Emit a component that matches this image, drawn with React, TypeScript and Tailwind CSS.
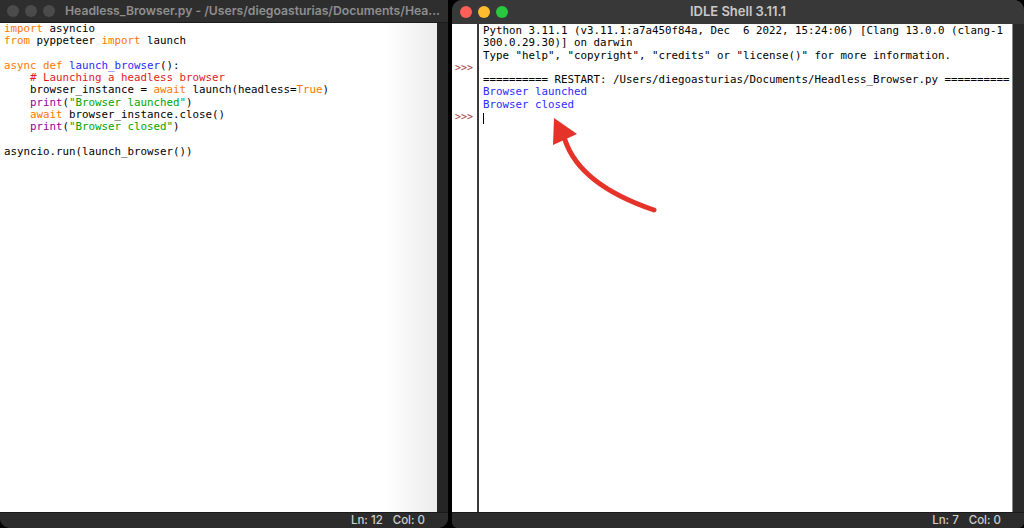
const mono = { fontFamily: '"DejaVu Sans Mono", "Liberation Mono", monospace' };

function Dots({ active }: { active: boolean }) {
  return (
    <div className="flex items-center gap-[6px]">
      <span className={`h-[12px] w-[12px] rounded-full ${active ? 'bg-[#fe5f57]' : 'bg-[#4b4b4b]'}`} />
      <span className={`h-[12px] w-[12px] rounded-full ${active ? 'bg-[#febc2e]' : 'bg-[#4b4b4b]'}`} />
      <span className={`h-[12px] w-[12px] rounded-full ${active ? 'bg-[#28c840]' : 'bg-[#4b4b4b]'}`} />
    </div>
  );
}

function StatusBar({ ln }: { ln: number }) {
  return (
    <div className="flex h-[16px] items-center justify-end gap-[10px] border-t border-[#1a1a1a] bg-[#2c2c2c] pr-[23px] font-['Inter','Liberation_Sans',sans-serif] text-[11.5px] font-medium text-[#cfcfcf]">
      <span>Ln: {ln}</span>
      <span>Col: 0</span>
    </div>
  );
}

const K = 'text-[#ff7700]';
const B = 'text-[#9a009a]';
const S = 'text-[#00a600]';

export default function App() {
  return (
    <div className="relative flex h-[528px] w-[1024px] overflow-hidden bg-black">
      {/* editor window */}
      <div className="flex w-[448px] flex-col overflow-hidden rounded-b-[10px] bg-[#2c2c2c]">
        <div className="flex h-[23px] items-center gap-[10px] overflow-hidden border-b border-[#1c1c1c] bg-[#2e2e2e] pl-[7px]">
          <Dots active={false} />
          <span className="whitespace-nowrap font-['Inter','Liberation_Sans',sans-serif] text-[12.2px] font-semibold text-[#8f8f8f]">
            Headless_Browser.py - /Users/diegoasturias/Documents/Hea...
          </span>
        </div>
        <div className="flex flex-1">
          <div className="flex-1 bg-gradient-to-r from-white from-[88%] to-[#ececec] pl-[4px] text-[10.8px] leading-[12.25px] text-black" style={mono}>
            <pre style={mono}>
              <span className={K}>import</span> asyncio{'\n'}
              <span className={K}>from</span> pyppeteer <span className={K}>import</span> launch{'\n'}
              {'\n'}
              <span className={K}>async def</span> <span className="text-[#2b2bff]">launch_browser</span>():{'\n'}
              {'    '}<span className="text-[#e21b1b]"># Launching a headless browser</span>{'\n'}
              {'    '}browser_instance = <span className={K}>await</span> launch(headless=<span className={K}>True</span>){'\n'}
              {'    '}<span className={B}>print</span>(<span className={S}>"Browser launched"</span>){'\n'}
              {'    '}<span className={K}>await</span> browser_instance.close(){'\n'}
              {'    '}<span className={B}>print</span>(<span className={S}>"Browser closed"</span>){'\n'}
              {'\n'}
              asyncio.run(launch_browser())
            </pre>
          </div>
          <div className="w-[11px] bg-[#252525]" />
        </div>
        <StatusBar ln={12} />
      </div>

      <div className="w-[4px]" />

      {/* shell window */}
      <div className="flex flex-1 flex-col overflow-hidden rounded-t-[10px] rounded-b-[6px] bg-[#2c2c2c]">
        <div className="relative flex h-[24px] items-center bg-[#383838] pl-[8px]">
          <Dots active />
          <span className="absolute inset-x-0 text-center font-['Inter','Liberation_Sans',sans-serif] text-[13px] font-semibold text-[#c9c9c9]">
            IDLE Shell 3.11.1
          </span>
        </div>
        <div className="flex flex-1">
          <div className="w-[25px] bg-white pt-[1px] text-[10px] leading-[12.3px] text-[#a83c3c]" style={mono}>
            <pre style={mono} className="pl-[3px]">
              {'\n\n\n'}&gt;&gt;&gt;{'\n\n\n\n'}&gt;&gt;&gt;
            </pre>
          </div>
          <div className="w-[2px] bg-[#3a3a3a]" />
          <div className="flex-1 overflow-hidden bg-white pl-[4px] pt-[1px] text-[10.8px] leading-[12.3px] text-black" style={mono}>
            <pre style={mono}>
              Python 3.11.1 (v3.11.1:a7a450f84a, Dec  6 2022, 15:24:06) [Clang 13.0.0 (clang-1{'\n'}
              300.0.29.30)] on darwin{'\n'}
              Type "help", "copyright", "credits" or "license()" for more information.{'\n'}
              {'\n'}
              ========== RESTART: /Users/diegoasturias/Documents/Headless_Browser.py =========={'\n'}
              <span className="text-[#2b2bff]">Browser launched</span>{'\n'}
              <span className="text-[#2b2bff]">Browser closed</span>{'\n'}
              <span className="inline-block h-[11px] w-[1px] translate-y-[1px] bg-black align-middle" />
            </pre>
          </div>
          <div className="w-[12px] border-l border-[#888] bg-[#2a2a2a]" />
        </div>
        <StatusBar ln={7} />
      </div>

      {/* annotation arrow */}
      <svg className="pointer-events-none absolute left-0 top-0" width="1024" height="528">
        <path d="M654 210 Q580 185 565 140" fill="none" stroke="#e5332a" strokeWidth="5" strokeLinecap="round" />
        <polygon points="554,118 553,145 577,134" fill="#e5332a" />
      </svg>
    </div>
  );
}
